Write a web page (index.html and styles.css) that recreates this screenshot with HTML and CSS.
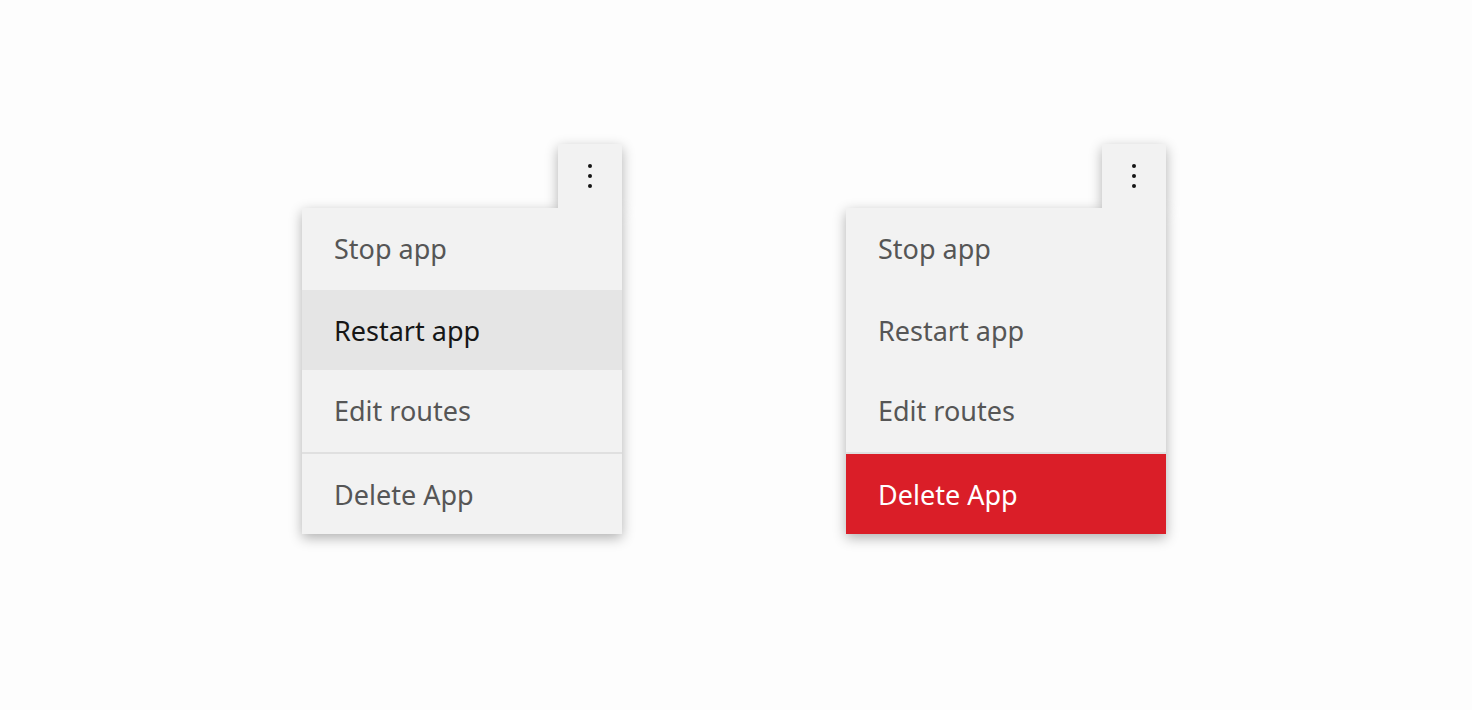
FILE: index.html
```html
<!DOCTYPE html>
<html lang="en">

<head>
    <meta charset="UTF-8">
    <meta name="viewport" content="width=device-width, initial-scale=1.0">
    <title>Overflow menu</title>
    <link rel="stylesheet" href="styles.css">
</head>

<body>
    <div class="stage">
        <!-- hover state -->
        <div class="overflow">
            <button class="trigger" aria-label="Options">
                <svg width="4" height="24" viewBox="0 0 4 24">
                    <circle cx="2" cy="2" r="2"></circle>
                    <circle cx="2" cy="12" r="2"></circle>
                    <circle cx="2" cy="22" r="2"></circle>
                </svg>
            </button>
            <ul class="menu">
                <li class="menu-item first">Stop app</li>
                <li class="menu-item hover">Restart app</li>
                <li class="menu-item">Edit routes</li>
                <li class="menu-item divider">Delete App</li>
            </ul>
        </div>

        <!-- danger hover state -->
        <div class="overflow">
            <button class="trigger" aria-label="Options">
                <svg width="4" height="24" viewBox="0 0 4 24">
                    <circle cx="2" cy="2" r="2"></circle>
                    <circle cx="2" cy="12" r="2"></circle>
                    <circle cx="2" cy="22" r="2"></circle>
                </svg>
            </button>
            <ul class="menu">
                <li class="menu-item first">Stop app</li>
                <li class="menu-item">Restart app</li>
                <li class="menu-item">Edit routes</li>
                <li class="menu-item divider danger">Delete App</li>
            </ul>
        </div>
    </div>
</body>

</html>
```

FILE: styles.css
```css
* {
    box-sizing: border-box;
}

body {
    margin: 0;
    background: #fdfdfd;
    font-family: 'Noto Sans', 'Open Sans', sans-serif;
    height: 100vh;
    overflow: hidden;
}

.stage {
    display: flex;
    align-items: flex-start;
    gap: 224px;
    padding: 144px 0 0 302px;
}

.overflow {
    display: flex;
    flex-direction: column;
    align-items: flex-end;
    width: 320px;
}

.trigger {
    position: relative;
    z-index: 2;
    width: 64px;
    height: 64px;
    border: none;
    padding: 0;
    background: #f2f2f2;
    display: flex;
    align-items: center;
    justify-content: center;
    box-shadow: 0 4px 12px rgba(0, 0, 0, 0.3);
    /* keep the side shadow, drop the one that would fall on the menu */
    clip-path: polygon(-20px -20px, calc(100% + 20px) -20px, calc(100% + 20px) calc(100% + 20px),
            100% calc(100% + 20px), 100% 100%, -20px 100%);
    cursor: pointer;
}

.trigger svg {
    fill: #161616;
}

.menu {
    position: relative;
    z-index: 1;
    list-style: none;
    margin: 0;
    padding: 0;
    width: 320px;
    background: #f2f2f2;
    box-shadow: 0 4px 12px rgba(0, 0, 0, 0.3);
}

.menu-item {
    height: 80px;
    display: flex;
    align-items: center;
    padding: 0 32px;
    font-size: 27px;
    color: #565656;
    cursor: pointer;
}

.menu-item.first {
    height: 82px;
    padding-bottom: 2px;
}

.menu-item.hover {
    background: #e5e5e5;
    color: #161616;
}

.menu-item.divider {
    border-top: 2px solid #e0e0e0;
    height: 82px;
    margin-top: 2px;
}

.menu-item.danger {
    background: #da1e28;
    color: #ffffff;
}
```
